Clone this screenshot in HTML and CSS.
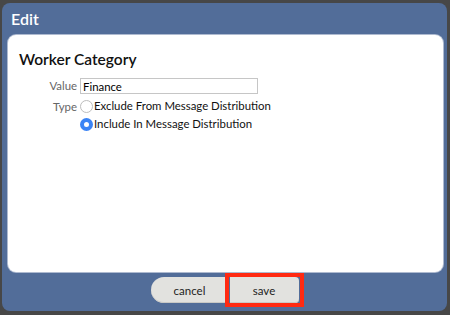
FILE: index.html
```html
<!DOCTYPE html>
<html>
<head>
	<meta charset="utf-8">
	<title>Edit</title>
	<link rel="stylesheet" href="styles.css">
</head>
<body>
	<div class="dialog">
		<div class="dialog-title">Edit</div>
		<div class="dialog-body">
			<h2>Worker Category</h2>
			<div class="form">
				<label class="field-label" for="value">Value</label>
				<div class="field"><input id="value" class="text-input" type="text" value="Finance"></div>

				<div class="field-label">Type</div>
				<div class="field options">
					<label class="option"><span class="radio"></span>Exclude From Message Distribution</label>
					<label class="option"><span class="radio checked"></span>Include In Message Distribution</label>
				</div>
			</div>
		</div>
		<div class="dialog-buttons">
			<button class="btn btn-cancel">cancel</button>
			<button class="btn btn-save">save<span class="highlight"></span></button>
		</div>
	</div>
</body>
</html>
```

FILE: styles.css
```css
body{
	margin: 0px;
	padding: 3px 3px 4px 2px;
	background: #474747;
	font-family: Lato, "Open Sans", sans-serif;
}

.dialog{
	width: 445px;
	height: 308px;
	background: #526d99;
	border-radius: 8px;
	display: flex;
	flex-direction: column;
}

.dialog-title{
	height: 32px;
	line-height: 32px;
	padding-left: 9px;
	color: #fff;
	font-size: 16px;
	font-weight: 600;
}

.dialog-body{
	margin: 0px 4px 0px 6px;
	height: 237px;
	background: #fff;
	border-radius: 8px;
	box-shadow: 0 0 0 1px #aebad0;
	padding: 14px 11px 0px 11px;
	box-sizing: border-box;
}

h2{
	margin: 0px;
	font-size: 15.5px;
	font-weight: 600;
	line-height: 20px;
	color: #111;
}

.form{
	margin-top: 9px;
	display: grid;
	grid-template-columns: 58px auto;
	column-gap: 3px;
	row-gap: 5px;
	font-size: 11.4px;
}

.field-label{
	text-align: right;
	color: #666;
	line-height: 16px;
}

.text-input{
	width: 178px;
	height: 16px;
	box-sizing: border-box;
	border: 1px solid #c6c6c6;
	padding: 0px 2px;
	font: inherit;
	color: #000;
	outline: none;
}

.options{
	display: flex;
	flex-direction: column;
	gap: 4px;
}

.option{
	display: flex;
	align-items: center;
	color: #111;
	line-height: 14px;
}

.radio{
	width: 13px;
	height: 13px;
	box-sizing: border-box;
	border: 1px solid #bdbdbd;
	border-radius: 50%;
	margin-right: 1px;
	background: #fff;
}

.radio.checked{
	border: 4px solid #3b84f5;
	background: #fff;
}

.dialog-buttons{
	display: flex;
	justify-content: center;
	padding-top: 5px;
}

.btn{
	height: 26px;
	border: none;
	background: #e2e2df;
	font-family: inherit;
	font-size: 11.5px;
	color: #222;
	padding: 0px;
}

.btn-cancel{
	width: 78px;
	border-radius: 13px 0px 0px 13px;
	box-shadow: inset 0 -1px 0 #c9c9c6;
}

.btn-save{
	position: relative;
	width: 69px;
	margin-left: 1px;
	border-radius: 0px 4px 4px 0px;
	box-shadow: inset 0 -1px 0 #c9c9c6;
}

.highlight{
	position: absolute;
	left: -5px;
	top: -4px;
	right: -5px;
	bottom: -4px;
	border: 4px solid #ff2a12;
	pointer-events: none;
}
```
